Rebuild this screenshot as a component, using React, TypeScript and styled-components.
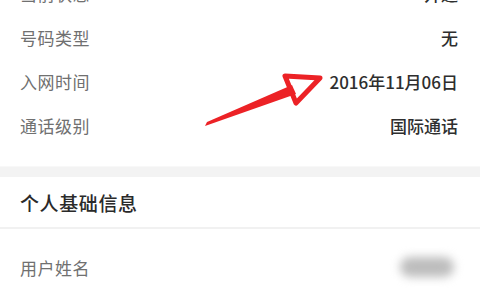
import React from "react";
import styled, { createGlobalStyle } from "styled-components";

const Global = createGlobalStyle`
  html, body { margin: 0; padding: 0; background: #ffffff; }
  body { font-family: "Noto Sans CJK SC", "Noto Sans", sans-serif; overflow: hidden; }
`;

const Page = styled.div`
  position: relative;
  width: 480px;
  height: 300px;
  overflow: hidden;
  background: #ffffff;
`;

const Section = styled.div<{ $shift?: number; $padBottom?: number }>`
  display: flex;
  flex-direction: column;
  margin-top: ${(p) => p.$shift ?? 0}px;
  padding-bottom: ${(p) => p.$padBottom ?? 0}px;
  background: #ffffff;
`;

const Row = styled.div<{ $h?: number }>`
  display: flex;
  align-items: center;
  justify-content: space-between;
  height: ${(p) => p.$h ?? 44}px;
  padding: 0 22px 0 20px;
`;

const Label = styled.span`
  font-size: 17px;
  color: #707070;
  letter-spacing: 0.5px;
`;

const Value = styled.span`
  font-size: 17px;
  color: #2e2e2e;
  font-weight: 500;
`;

const Gap = styled.div`
  height: 10px;
  background: #f3f3f3;
  border-top: 1px solid #f8f8f8;
`;

const Header = styled.div`
  display: flex;
  align-items: center;
  height: 50px;
  padding: 0 20px;
  border-bottom: 2px solid #f1f1f1;
`;

const Title = styled.span`
  font-size: 19px;
  color: #2a2a2a;
  font-weight: 500;
  letter-spacing: 0.6px;
`;

const Blur = styled.div`
  width: 54px;
  height: 20px;
  border-radius: 10px;
  background: #bdbdbd;
  filter: blur(5px);
  margin-right: 4px;
`;

const Arrow = styled.svg`
  position: absolute;
  left: 0;
  top: 0;
  pointer-events: none;
`;

export default function App() {
  return (
    <Page>
      <Global />
      <Section $shift={-29} $padBottom={19}>
        <Row>
          <Label>当前状态</Label>
          <Value>开通</Value>
        </Row>
        <Row>
          <Label>号码类型</Label>
          <Value>无</Value>
        </Row>
        <Row>
          <Label>入网时间</Label>
          <Value>2016年11月06日</Value>
        </Row>
        <Row>
          <Label>通话级别</Label>
          <Value>国际通话</Value>
        </Row>
      </Section>
      <Gap />
      <Header>
        <Title>个人基础信息</Title>
      </Header>
      <Section>
        <Row $h={76}>
          <Label>用户姓名</Label>
          <Blur />
        </Row>
        <Row>
          <Label>证件类型</Label>
          <Value>身份证</Value>
        </Row>
      </Section>
      <Arrow width="480" height="300" viewBox="0 0 480 300">
        <path d="M205 126 L207 122 L292 85 L296 94 Z" fill="#ec2226" />
        <path
          d="M285 76 L320 78 L296 103 Z"
          fill="none"
          stroke="#ec2226"
          strokeWidth="5"
          strokeLinejoin="round"
        />
      </Arrow>
    </Page>
  );
}
